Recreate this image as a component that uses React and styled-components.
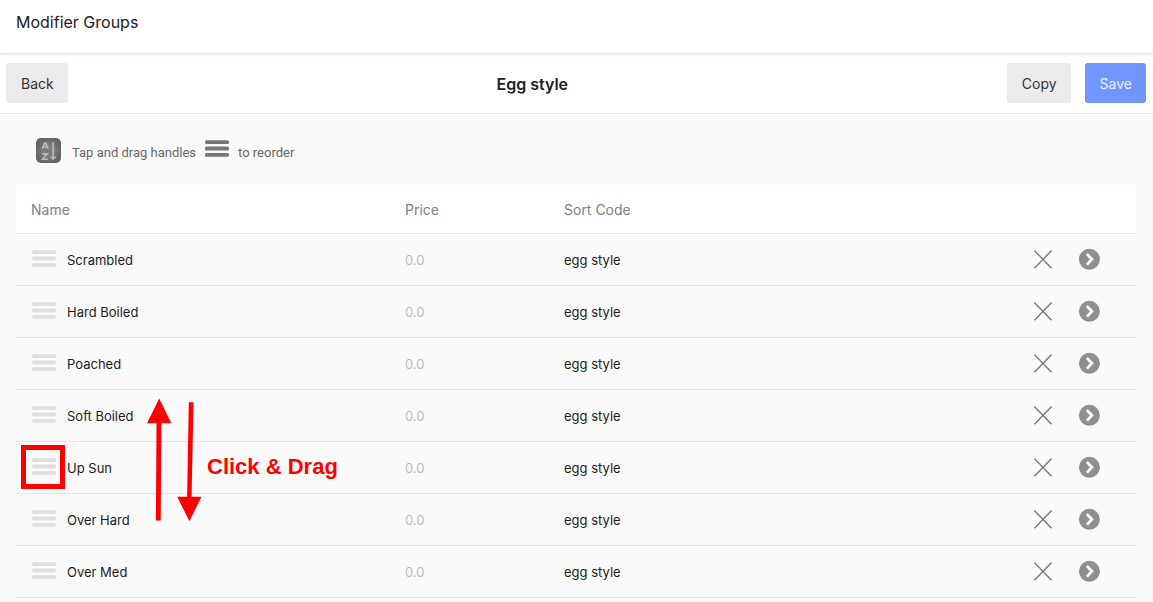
import React, { useState } from "react";
import styled, { createGlobalStyle, css } from "styled-components";

const GlobalStyle = createGlobalStyle`
  *, *::before, *::after { box-sizing: border-box; }
  body {
    margin: 0;
    background: #fafafa;
    color: #212121;
    font-family: Inter, "Liberation Sans", sans-serif;
    font-size: 13px;
    line-height: 20px;
  }
  button, input { font: inherit; color: inherit; }
`;

const AppBar = styled.header`
  position: relative;
  height: 53px;
  padding: 12px 16px;
  background: #fff;
  box-shadow: 0 1px 3px rgba(0, 0, 0, 0.18);
  font-size: 16px;
`;

const PageName = styled.div`
  line-height: 20px;
`;

const Toolbar = styled.div`
  display: flex;
  justify-content: space-between;
  align-items: center;
  padding: 10px 7px 10px 6px;
  background: #fff;
  border-bottom: 1px solid #e6e6e6;
`;

const ToolbarGroup = styled.div`
  display: flex;
  gap: 14px;
`;

const Title = styled.h1`
  margin: 0;
  padding: 2px 10px 0 0;
  font-size: 16px;
  font-weight: 600;
  line-height: 24px;
`;

const Button = styled.button`
  height: 40px;
  padding: 2px 14px 0 15px;
  border: 0;
  border-radius: 3px;
  font-size: 14px;
  cursor: pointer;
  background: #ebebeb;
  color: #333;
  ${(p) =>
    p.$primary &&
    css`
      background: #7096ff;
      color: #e9efff;
    `}
`;

const Content = styled.main`
  padding: 24px 17px 0 16px;
`;

const Hint = styled.p`
  display: flex;
  align-items: flex-start;
  margin: 0;
  height: 47px;
  padding-left: 20px;
  color: #666;
  font-family: Roboto, "Liberation Sans", sans-serif;
`;

const HintText = styled.span`
  padding: 5px 0 0;
  margin-left: ${(p) => (p.$after ? "8px" : "11px")};
  margin-right: ${(p) => (p.$after ? "0" : "8px")};
`;

const HintHandle = styled.span`
  display: flex;
  padding-top: 2px;
`;

const TableArea = styled.div`
  position: relative;
`;

const Table = styled.table`
  width: 100%;
  table-layout: fixed;
  border-collapse: separate;
  border-spacing: 0;
`;

const Column = styled.col`
  width: ${(p) => p.$width};
`;

const HeadCell = styled.th`
  height: 49px;
  padding: 2px 0 0 ${(p) => (p.$first ? "15px" : "0")};
  background: #fff;
  border-bottom: 1px solid #e6e6e6;
  color: #808080;
  font-size: 14px;
  font-weight: 400;
  text-align: left;
`;

const Cell = styled.td`
  height: 52px;
  padding: 0 0 ${(p) => (p.$action ? "2px" : "0")} ${(p) => (p.$first ? "15px" : "0")};
  border-bottom: 1px solid #e6e6e6;
`;

const NameField = styled.div`
  display: flex;
  align-items: center;
  gap: 10px;
`;

const TextInput = styled.input`
  display: block;
  width: 100%;
  min-width: 0;
  height: 24px;
  padding: 0;
  border: 0;
  outline: 0;
  background: transparent;
  color: #1c1c1c;
  &::placeholder { color: #bdbdbd; opacity: 1; }
`;

const IconButton = styled.button`
  position: relative;
  display: flex;
  flex: none;
  padding: 0;
  border: 0;
  background: none;
  cursor: ${(p) => (p.$drag ? "grab" : "pointer")};
`;

const Highlight = styled.span`
  position: absolute;
  top: 50%;
  left: 50%;
  width: 44px;
  height: 44px;
  margin: -23px 0 0 -23px;
  border: 5px solid #f00;
  pointer-events: none;
`;

const Annotation = styled.div`
  position: absolute;
  top: 213px;
  left: 130px;
  display: flex;
  align-items: center;
  gap: 5px;
  color: #f00;
  font-family: "Liberation Sans", Arial, sans-serif;
  font-size: 22px;
  font-weight: 700;
  line-height: 24px;
  pointer-events: none;
`;

const AnnotationText = styled.span`
  padding-top: 14px;
`;

const Bars = ({ color }) => (
  <svg width="26" height="20" viewBox="0 0 26 20" aria-hidden="true">
    <g fill={color}>
      <rect x="1" y="0.3" width="24" height="3.8" rx="1.5" />
      <rect x="1" y="6.6" width="24" height="3.8" rx="1.5" />
      <rect x="1" y="13" width="24" height="3.8" rx="1.5" />
    </g>
  </svg>
);

const SortIcon = () => (
  <svg width="25" height="25" viewBox="0 0 25 25" aria-hidden="true">
    <defs>
      <radialGradient id="sortShade">
        <stop offset="0.5" stopColor="#7c7c7c" />
        <stop offset="1" stopColor="#646464" />
      </radialGradient>
    </defs>
    <rect width="25" height="25" rx="5" fill="url(#sortShade)" />
    <g fill="none" stroke="#b9b9b9" strokeWidth="1.6">
      <path d="M6.3 10.6L8.7 5h1L12 10.6M7.3 9h3.8" />
      <path d="M6.3 15.9h5L6.5 21.2h5.2" />
      <path d="M17.1 4.2V20" />
    </g>
    <path d="M13.7 18.8h6.8l-3.4 3.4z" fill="#b9b9b9" />
  </svg>
);

const CrossIcon = () => (
  <svg width="20" height="20" viewBox="0 0 20 20" aria-hidden="true">
    <path d="M1.4 1.5l17.2 17.8M18.6 1.5L1.4 19.3" stroke="#7b7b7b" strokeWidth="1.4" />
  </svg>
);

const NextIcon = () => (
  <svg width="22" height="22" viewBox="0 0 22 22" aria-hidden="true">
    <circle cx="11.4" cy="11.3" r="10.5" fill="#8f8f8f" />
    <path d="M8.9 6l5 5.3-5 5.3" fill="none" stroke="#fff" strokeWidth="2.8" />
  </svg>
);

const Arrows = () => (
  <svg width="56" height="124" viewBox="0 0 56 124" aria-hidden="true">
    <g fill="#f00">
      <path d="M13.2 0.6L25.3 25.2H15.4L14.7 122.6H9.9L10.5 25.2H1z" />
      <path d="M42.8 4.3h4.7L45.6 98.7h9.9L43.4 123.2 31.2 98.7h9.9z" />
    </g>
  </svg>
);

const modifiers = [
  "Scrambled",
  "Hard Boiled",
  "Poached",
  "Soft Boiled",
  "Up Sun",
  "Over Hard",
  "Over Med",
];

function ModifierRow({ name, highlighted }) {
  const [label, setLabel] = useState(name);
  const [price, setPrice] = useState("");
  const [code, setCode] = useState("egg style");
  return (
    <tr>
      <Cell $first>
        <NameField>
          <IconButton type="button" $drag aria-label={`Reorder ${name}`}>
            <Bars color="#e0e0e0" />
            {highlighted && <Highlight />}
          </IconButton>
          <TextInput
            aria-label="Name"
            value={label}
            onChange={(e) => setLabel(e.target.value)}
          />
        </NameField>
      </Cell>
      <Cell>
        <TextInput
          aria-label={`Price of ${name}`}
          placeholder="0.0"
          value={price}
          onChange={(e) => setPrice(e.target.value)}
        />
      </Cell>
      <Cell>
        <TextInput
          aria-label={`Sort code of ${name}`}
          value={code}
          onChange={(e) => setCode(e.target.value)}
        />
      </Cell>
      <Cell $action>
        <IconButton type="button" aria-label={`Remove ${name}`}>
          <CrossIcon />
        </IconButton>
      </Cell>
      <Cell $action>
        <IconButton type="button" aria-label={`Open ${name}`}>
          <NextIcon />
        </IconButton>
      </Cell>
    </tr>
  );
}

export default function App() {
  return (
    <>
      <GlobalStyle />
      <AppBar>
        <PageName>Modifier Groups</PageName>
      </AppBar>
      <Toolbar>
        <ToolbarGroup>
          <Button type="button">Back</Button>
        </ToolbarGroup>
        <Title>Egg style</Title>
        <ToolbarGroup>
          <Button type="button">Copy</Button>
          <Button type="button" $primary>
            Save
          </Button>
        </ToolbarGroup>
      </Toolbar>
      <Content>
        <Hint>
          <SortIcon />
          <HintText>Tap and drag handles</HintText>
          <HintHandle>
            <Bars color="#757575" />
          </HintHandle>
          <HintText $after>to reorder</HintText>
        </Hint>
        <TableArea>
          <Table>
            <colgroup>
              <Column $width="389px" />
              <Column $width="159px" />
              <Column $width="auto" />
              <Column $width="45px" />
              <Column $width="58px" />
            </colgroup>
            <thead>
              <tr>
                <HeadCell $first scope="col">Name</HeadCell>
                <HeadCell scope="col">Price</HeadCell>
                <HeadCell scope="col">Sort Code</HeadCell>
                <HeadCell />
                <HeadCell />
              </tr>
            </thead>
            <tbody>
              {modifiers.map((name) => (
                <ModifierRow key={name} name={name} highlighted={name === "Up Sun"} />
              ))}
            </tbody>
          </Table>
          <Annotation>
            <Arrows />
            <AnnotationText>Click &amp; Drag</AnnotationText>
          </Annotation>
        </TableArea>
      </Content>
    </>
  );
}
